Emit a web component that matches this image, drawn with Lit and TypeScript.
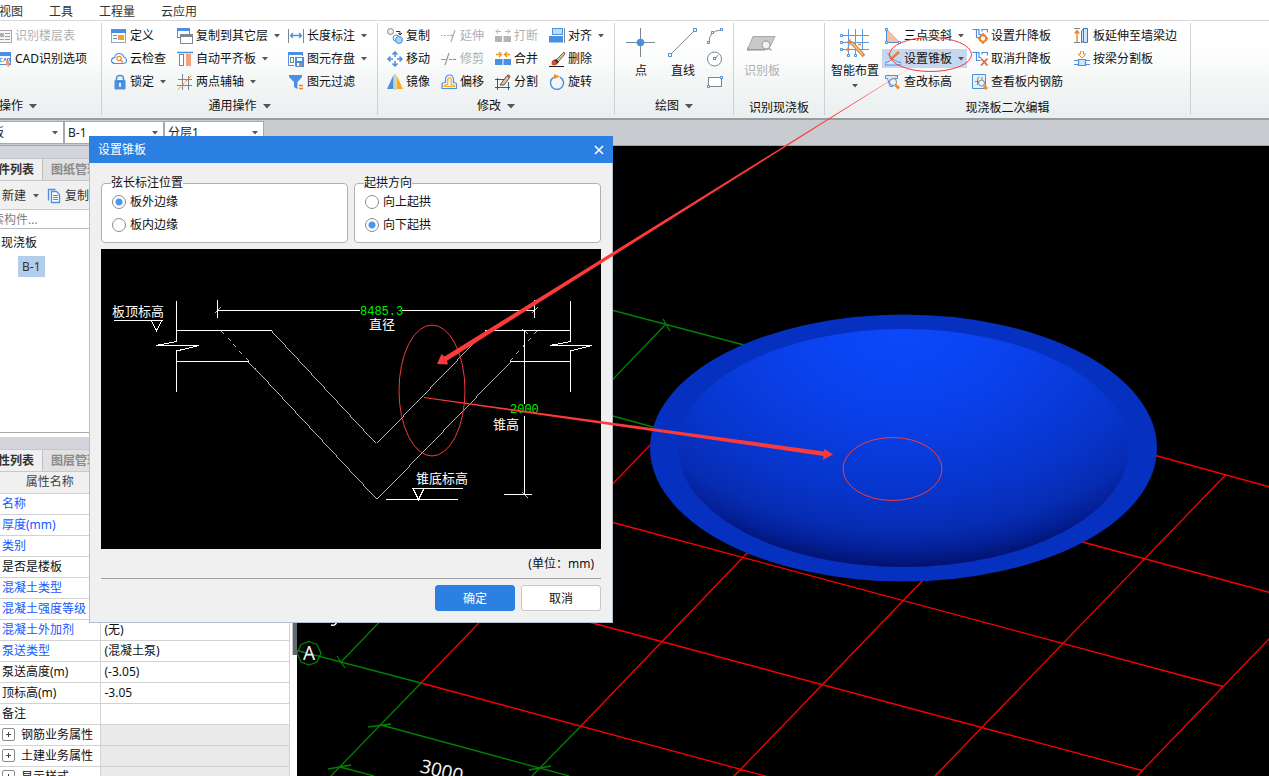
import { LitElement, html, svg, css, nothing, TemplateResult } from "lit";
import { customElement, property } from "lit/decorators.js";
import { classMap } from "lit/directives/class-map.js";

const BLUE = "#4a8fe0";
const NAVY = "#3a78c4";
const ORANGE = "#f07d28";
const SLATE = "#7b8894";
const MUTED = "#b4b4b4";

/* 16 x 16 toolbar glyphs */
const icons: Record<string, TemplateResult> = {
  floors: svg`<rect x=".5" y="2.5" width="15" height="12" fill="#f6f6f6" stroke="#a8a8a8"/><path d="M9 5.500h5M9 8.500h5M9 11.500h5" stroke="#a0a0a0"/><rect x="4" y="5" width="4" height="4" fill="#b0b0b0"/><path d="M4 11.500h4" stroke="#a0a0a0"/>`,
  cad: svg`<rect x=".5" y="1.5" width="14" height="12" fill="#fff" stroke="${BLUE}"/><path d="M0 1h15v4H0z" fill="${BLUE}"/><path d="M6.500 7.500Q4 6.500 4 9T6.500 10.500M7.500 10.500 9 7l1.500 3.500M11.500 7.500v3q3 0 2-3z" stroke="${BLUE}" fill="none"/><path d="m10 8 5 5-2 .3.600 2.200-1.800.3-.8-2.100L10 15z" fill="#f4966a"/>`,
  define: svg`<rect x=".5" y="1.500" width="14" height="13" fill="#fff" stroke="#9aa7b2"/><path d="M0 1h15v4H0z" fill="${BLUE}"/><path d="M2 7.500h4M2 10.500h4" stroke="${BLUE}"/><rect x="7" y="7" width="6" height="5" fill="#f5a42a"/>`,
  cloud: svg`<path d="M4.500 12.500C1.500 12.500.5 11 .5 9.500S2 6.800 3.500 6.700C4 4 6 2.500 8.200 2.500c2.300 0 4 1.500 4.500 3.500 1.800.3 2.800 1.500 2.800 3.200 0 2-1.400 3.300-3.500 3.300z" fill="#fff" stroke="${BLUE}" stroke-width="1.200"/><circle cx="8" cy="7.500" r="2.200" fill="none" stroke="${ORANGE}" stroke-width="1.100"/><path d="m9.500 9 2.500 2.500" stroke="${ORANGE}" stroke-width="1.200"/>`,
  lock: svg`<path d="M5.500 7V4.500Q5.500 1.500 9 1.500t3.500 3V7" fill="none" stroke="${BLUE}" stroke-width="1.600"/><rect x="3.500" y="6" width="11" height="9.500" rx="1" fill="${BLUE}"/><path d="M9 9v4M8 10h2" stroke="#fff" stroke-width="1.500"/>`,
  copyfloor: svg`<rect x=".5" y=".5" width="12" height="9" fill="#fff" stroke="${SLATE}"/><path d="M0 0h13v3H0z" fill="${BLUE}"/><rect x="3.500" y="6.500" width="12" height="9" fill="#fff" stroke="${SLATE}"/><path d="M3 6h13v3H3z" fill="${SLATE}"/>`,
  level: svg`<path d="M0 1.500h16" stroke="${BLUE}" stroke-width="1.500"/><rect x="2.500" y="3.500" width="4" height="11" fill="#fff" stroke="${SLATE}"/><path d="M9 3h5v12H9z" fill="#f7a07c"/>`,
  axis: svg`<path d="M5.500 0v16M11.500 2v14M1 5.500h14M0 11.500h15" stroke="${SLATE}"/><path d="M1 15.500 15 1" stroke="${ORANGE}" stroke-dasharray="4 1"/>`,
  length: svg`<path d="M.5 1v14M15.500 1v14" stroke="${SLATE}"/><path d="M3 7.500h10M5 5 2.500 7.500 5 10m6-5 2.500 2.500L11 10" stroke="${BLUE}" fill="none" stroke-width="1.300"/>`,
  store: svg`<path d="M.5 14.500V1.500h14V5M.5 14.500H6" stroke="${BLUE}" fill="none"/><path d="M0 1h15v3H0zM7 6h9v10H8l-1-1z" fill="${BLUE}"/><rect x="2.500" y="6.500" width="3" height="5" fill="none" stroke="${SLATE}"/><path d="M9 7h5v3H9zM9 12h5v3H9z" fill="#fff"/><path d="M11 12h3v3h-3z" fill="${ORANGE}"/>`,
  filter: svg`<path d="M1 1h13v2L9.500 8v7L6 13V8L1 3z" fill="${BLUE}"/><path d="M11 11.500h4M11 14.500h4" stroke="${ORANGE}" stroke-width="1.300"/>`,
  copy: svg`<circle cx="3.500" cy="3.500" r="3" fill="#eee" stroke="${SLATE}"/><path d="M9 3.500h4v3M11.500 5l1.500 2 2-2" fill="none" stroke="#333"/><circle cx="9" cy="10" r="3" fill="#fff" stroke="${BLUE}"/><circle cx="12" cy="12" r="3.500" fill="#a9d0f8" stroke="${BLUE}"/>`,
  move: svg`<path d="M8 1v5M8 10v5M1 8h5M10 8h5M5.500 3.500 8 1l2.500 2.500M5.500 12.500 8 15l2.500-2.500M3.500 5.500 1 8l2.500 2.500M12.500 5.500 15 8l-2.500 2.500" fill="none" stroke="${BLUE}" stroke-width="1.500"/>`,
  mirror: svg`<path d="M6.500 1v14H0z" fill="${BLUE}"/><path d="M9.500 1v14H16z" fill="#f5ae24"/><path d="M8 0v16" stroke="#9aa" />`,
  extend: svg`<path d="M0 7.500h9" stroke="${MUTED}" stroke-dasharray="2 1"/><path d="M10 14 14 2M9 7.500h4" stroke="${MUTED}" stroke-width="1.300"/>`,
  trim: svg`<path d="M0 8.500h5M4 14 8 2" stroke="#999" stroke-width="1.200"/><path d="M8 8.500h8" stroke="#888" stroke-dasharray="3 1"/>`,
  offset: svg`<path d="M1 14.500v-4q0-2 3.500-2V6Q4.500 1 8.500 1t4 5v2.500q3 0 3 2v4z" fill="none" stroke="${BLUE}" stroke-width="1.200"/><path d="M3 12.500q0-1.800 3.700-1.800V7Q6.700 3.500 8.500 3.500T10.300 7v3.700Q13.500 10.700 13.500 12.500z" fill="none" stroke="#f5ae24" stroke-width="1.200"/>`,
  split: svg`<path d="M0 8h7v6H0zM8.500 8H16v6H8.500z" fill="${MUTED}"/><path d="M1 3.500h5M3.500 1 1 3.500 3.500 6M10 3.500h5M12.500 1 15 3.500 12.500 6" stroke="${MUTED}" fill="none"/>`,
  merge: svg`<path d="M0 8h7.500v6H0zM8.500 8H16v6H8.500z" fill="${BLUE}"/><path d="M1 3.500h5M4 1l2.500 2.500L4 6M15 3.500h-5M12 1 9.500 3.500 12 6" stroke="#f0941e" fill="none" stroke-width="1.300"/>`,
  cut: svg`<path d="M0 5.500h10M0 13.500h15M2.500 4v12M13.500 8v8" stroke="#34578c"/><path d="M5 11h4l6-8-1-2-2 .5z" fill="#e9c49a" stroke="#333" stroke-width=".8"/><path d="m13 1 2 2-1 1.500-2-2z" fill="#d65640"/>`,
  align: svg`<path d="M15.500 0v15" stroke="${SLATE}"/><rect x="3.500" y=".5" width="10" height="6" fill="#b9dcfb" stroke="${BLUE}"/><path d="M0 8h14v6.500H0z" fill="${BLUE}"/>`,
  erase: svg`<path d="M0 15.500h15" stroke="#222"/><path d="m15 1-8 8 2 2 7-8z" fill="#e0b98c" stroke="#333" stroke-width=".7"/><path d="M7 8 10 11 7 14 3 13V10z" fill="#333"/><circle cx="5" cy="12" r="2.500" fill="#d8531e"/>`,
  rotate: svg`<path d="M5 3.200A6.500 6.500 0 1 0 11 3.200" fill="none" stroke="${BLUE}" stroke-width="1.400"/><path d="m5 0 6 2.500L5 5z" fill="#f0901e"/>`,
  arc: svg`<path d="M2 14Q2 3 14 2" fill="none" stroke="${SLATE}"/><path d="M.5 13.500h2v2h-2zM4.500 3.500h2v2h-2zM13.500.5h2v2h-2z" fill="#fff" stroke="${BLUE}"/>`,
  circle: svg`<circle cx="7.500" cy="8" r="7" fill="#fff" stroke="${SLATE}"/><path d="m8 8 3-4" stroke="${BLUE}"/><rect x="6.500" y="6.500" width="2" height="2" fill="#fff" stroke="${BLUE}"/>`,
  rect: svg`<rect x="1.500" y="3.500" width="13" height="9" fill="#fff" stroke="${SLATE}"/><path d="M.5 11.500h2v2h-2zM13.500 2.500h2v2h-2z" fill="#fff" stroke="${BLUE}"/>`,
  slope: svg`<path d="M1.500 1v13.500h13z" fill="#f9bf9c" stroke="#f0a070"/><path d="M1.500 2v12.500H14" stroke="${BLUE}" fill="none"/><path d="M.5.5h2v2h-2zM.5 13.500h2v2h-2zM13.500 13.500h2v2h-2z" fill="#fff" stroke="${BLUE}"/>`,
  cone: svg`<path d="M0 11.500 3 11l4-3 6 3 3 .5V14H0z" fill="#d3e6f9" stroke="${BLUE}"/><path d="m6 8 8-7" stroke="${ORANGE}" stroke-width="2.500"/><path d="m2.500 2 4 6" stroke="#d07a86"/>`,
  elevation: svg`<path d="M.5 1.500h12v3h-2L8 12.500H5L2.500 4.500h-2z" fill="#d9ebfb" stroke="${BLUE}"/><circle cx="8" cy="8" r="3.500" fill="#eef6fd" stroke="${SLATE}"/><path d="m10.500 11 3.500 3.500" stroke="#f0901e" stroke-width="3"/>`,
  raise: svg`<path d="M.5 1.500h4v8h4M3 1.500h4v5h2m1-3V1.500h5.500v3" fill="none" stroke="${BLUE}" stroke-width="1.200"/><circle cx="11" cy="10.500" r="3.300" fill="#fff" stroke="${ORANGE}" stroke-width="2.200"/><path d="M11 5v2M11 14v2M5.800 10.500h2M14.200 10.500h1.800" stroke="${ORANGE}" stroke-width="1.600"/>`,
  unraise: svg`<path d="M.5 1.500h4v8h4M3 1.500h4v5h2m1-3V1.500h5.500v3" fill="none" stroke="${BLUE}" stroke-width="1.200"/><path d="m9 7.500 6.500 7M15.500 7.500l-6.500 7" stroke="#e0674a" stroke-width="1.800"/>`,
  rebar: svg`<path d="M.5.5h13v14H.5z" fill="#e7f1fb" stroke="${BLUE}"/><path d="M3 7.500h9M7.500 3q-2 0-2 3v5M10 3v3" stroke="${SLATE}" fill="none"/><circle cx="9.500" cy="9" r="3" fill="#eef6fd" stroke="${SLATE}"/><path d="m12 12 3 3" stroke="#f0901e" stroke-width="3"/>`,
  extendwall: svg`<path d="M0 .5h6M0 14.500h6" stroke="${SLATE}"/><path d="M3 14V3M.8 5.500 3 2.500l2.200 3" stroke="${ORANGE}" stroke-width="1.300" fill="none"/><path d="M7.500 3 9.500.5v12.500l-2 2zM9.500.5h4v14h-4z" fill="#d3e6f9" stroke="${NAVY}"/>`,
  beamcut: svg`<path d="M6.500 0h3v3h2.500L8 7 4 3h2.500z" fill="#fff" stroke="#f0901e"/><path d="M4.500 8.500h7v6h-7zM0 9.500h4M0 13.500h4M12 9.500h4M12 13.500h4" fill="#d3e6f9" stroke="${BLUE}" stroke-width="1.200"/>`,
  pages: svg`<path d="M1.500 12.500V1.500h7" fill="none" stroke="${BLUE}" stroke-width="1.300"/><path d="M4.500 3.500h5l3 3v8h-8z" fill="#fff" stroke="${BLUE}" stroke-width="1.300"/><path d="M6 7.500h5M6 9.500h5M6 11.500h5" stroke="${BLUE}"/>`,
};

/* 30 x 30 glyphs of the tall buttons */
const bigIcons: Record<string, TemplateResult> = {
  point: svg`<path d="M0 14.500h29M14.500 0v29" stroke="${SLATE}"/><circle cx="14.500" cy="14.500" r="3.800" fill="${BLUE}"/>`,
  line: svg`<path d="M2 27 27 2" stroke="${SLATE}"/><path d="M.5 25.500h3v3h-3zM25.500.5h3v3h-3z" fill="#fff" stroke="${BLUE}"/>`,
  slab: svg`<path d="M6 8.500h22L21.500 21.500H.5z" fill="#c9c9c9" stroke="#a6a6a6"/><path d="M.5 19.500 0 22h18" stroke="#8d8d8d" fill="none"/><circle cx="19" cy="17" r="4" fill="#f2f2f2" stroke="#aaa" stroke-width="1.400"/><path d="m22 20 2.500 2.500" stroke="#aaa" stroke-width="1.500"/>`,
  smart: svg`<path d="M2 7.500h27M2 14.500h27M2 21.500h27M8.500 1v26M15.500 1v26M22.500 1v20" stroke="#5b9ae4"/><path d="M.5 6.500h2v2h-2zM.5 13.500h2v2h-2zM.5 20.500h2v2h-2zM7.500 26.500h2v2h-2zM14.500 26.500h2v2h-2z" fill="#fff" stroke="${BLUE}"/><path d="m12 15 12 13" stroke="#c98b4b" stroke-width="3.500"/><path d="m12 15 11 12" stroke="#f2c99a" stroke-width="1.200"/><path d="m10 10 1 3 3 1-3 1-1 3-1-3-3-1 3-1z" fill="${ORANGE}"/><path d="M6 21.500h4M8 19.500v4M18 16.500h3" stroke="${ORANGE}" stroke-width="1.300"/>`,
};

const caret = html`<svg class="caret" width="6" height="4" viewBox="0 0 6 4" aria-hidden="true"><path d="M0 0h6L3 3.500z" fill="#555"/></svg>`;
const bigCaret = html`<svg class="caret" width="8" height="5" viewBox="0 0 8 5" aria-hidden="true"><path d="M0 0h8L4 4.500z" fill="#555"/></svg>`;

interface Tool { icon: string; text: string; drop?: boolean; off?: boolean; on?: boolean; }

const t = (icon: string, text: string, opt: Partial<Tool> = {}): Tool => ({ icon, text, ...opt });

const reset = css`
  button { border: 0; margin: 0; padding: 0; background: none; font: inherit; color: inherit; white-space: nowrap; text-align: left; }
  svg { display: block; flex: none; }
`;

@customElement("ribbon-bar")
class RibbonBar extends LitElement {
  static styles = [reset, css`
    :host { display: block; }
    .menu { display: flex; gap: 26px; height: 20px; align-items: center; padding-top: 3px; box-sizing: border-box; margin-left: -1px; color: #333; background: #fff; }
    .menu button { line-height: 16px; }
    .ribbon { display: flex; border-top: 1px solid #d9d9d9; border-bottom: 2px solid #979d9f; padding: 2px 0 3px; background: linear-gradient(#fff 25%, #eaeeee); }
    .group { flex: none; box-sizing: border-box; border-right: 1px solid #cdd1d3; padding-top: 1px; height: 92px; display: flex; flex-direction: column; }
    .body { display: flex; height: 69px; }
    .cols { display: grid; grid-template-rows: repeat(3, 23px); grid-auto-flow: column; align-items: center; justify-items: start; }
    .tool { display: flex; align-items: center; height: 19px; padding: 0 3px; }
    .tool svg.ic { margin-right: 3px; }
    .tool .caret { margin-left: 6px; }
    .off { color: #b0b0b0; }
    .on { background: #c5d8f0; }
    .big { display: flex; flex-direction: column; align-items: center; height: 69px; padding-top: 4px; line-height: 16px; }
    .big svg.ic { margin-bottom: 5px; }
    .big .caret { margin-top: 5px; }
    .label { display: flex; justify-content: center; align-items: center; gap: 6px; box-sizing: border-box; height: 22px; padding-top: 4px; }
    .plain { padding-top: 8px; }
    .g1 { width: 102px; overflow: hidden; }
    .g1 .cols { margin-left: -7px; }
    .g1 .label { justify-content: flex-start; margin-left: -1px; }
    .g2 { width: 276px; } .g2 .body { padding-left: 6px; } .g2 .cols { grid-template-columns: 66px 111px 90px; }
    .g3 { width: 237px; } .g3 .body { padding-left: 6px; } .g3 .cols { grid-template-columns: repeat(4, 54px); }
    .g4 { width: 119px; } .g4 .body { padding-left: 8px; gap: 6px; } .g4 .big { width: 36px; } .g4 .tool { padding: 0; }
    .g5 { width: 91px; } .g5 .body { padding-left: 10px; }
    .g6 { width: 366px; } .g6 .body { padding-left: 6px; gap: 3px; } .g6 .cols { grid-template-columns: 87px 102px 110px; }
  `];

  private tool(x: Tool) {
    return html`<button class=${classMap({ tool: true, off: !!x.off, on: !!x.on })} ?disabled=${x.off}>
      <svg class="ic" width="16" height="16" viewBox="0 0 16 16" aria-hidden="true">${icons[x.icon]}</svg>${x.text}${x.drop ? caret : nothing}
    </button>`;
  }

  private cols(list: Tool[]) {
    return html`<div class="cols">${list.map((x) => this.tool(x))}</div>`;
  }

  private big(icon: string, text: string, off = false, drop = false) {
    return html`<button class=${classMap({ big: true, off })} ?disabled=${off}>
      <svg class="ic" width="30" height="30" viewBox="0 0 30 30" aria-hidden="true">${bigIcons[icon]}</svg>${text}${drop ? caret : nothing}
    </button>`;
  }

  render() {
    return html`
      <nav class="menu">${["视图", "工具", "工程量", "云应用"].map((m) => html`<button>${m}</button>`)}</nav>
      <div class="ribbon">
        <section class="group g1">
          <div class="body">${this.cols([t("floors", "识别楼层表", { off: true }), t("cad", "CAD识别选项")])}</div>
          <button class="label">操作${bigCaret}</button>
        </section>
        <section class="group g2">
          <div class="body">${this.cols([
            t("define", "定义"), t("cloud", "云检查"), t("lock", "锁定", { drop: true }),
            t("copyfloor", "复制到其它层", { drop: true }), t("level", "自动平齐板", { drop: true }), t("axis", "两点辅轴", { drop: true }),
            t("length", "长度标注", { drop: true }), t("store", "图元存盘", { drop: true }), t("filter", "图元过滤"),
          ])}</div>
          <button class="label">通用操作${bigCaret}</button>
        </section>
        <section class="group g3">
          <div class="body">${this.cols([
            t("copy", "复制"), t("move", "移动"), t("mirror", "镜像"),
            t("extend", "延伸", { off: true }), t("trim", "修剪", { off: true }), t("offset", "偏移"),
            t("split", "打断", { off: true }), t("merge", "合并"), t("cut", "分割"),
            t("align", "对齐", { drop: true }), t("erase", "删除"), t("rotate", "旋转"),
          ])}</div>
          <button class="label">修改${bigCaret}</button>
        </section>
        <section class="group g4">
          <div class="body">${this.big("point", "点")}${this.big("line", "直线")}${this.cols([t("arc", ""), t("circle", ""), t("rect", "")])}</div>
          <button class="label">绘图${bigCaret}</button>
        </section>
        <section class="group g5">
          <div class="body">${this.big("slab", "识别板", true)}</div>
          <div class="label plain">识别现浇板</div>
        </section>
        <section class="group g6">
          <div class="body">${this.big("smart", "智能布置", false, true)}${this.cols([
            t("slope", "三点变斜", { drop: true }), t("cone", "设置锥板", { drop: true, on: true }), t("elevation", "查改标高"),
            t("raise", "设置升降板"), t("unraise", "取消升降板"), t("rebar", "查看板内钢筋"),
            t("extendwall", "板延伸至墙梁边"), t("beamcut", "按梁分割板"),
          ])}</div>
          <div class="label plain">现浇板二次编辑</div>
        </section>
      </div>`;
  }
}

interface Prop { name: string; value?: string; blue?: boolean; group?: boolean; }

const props: Prop[] = [
  { name: "名称", blue: true },
  { name: "厚度(mm)", blue: true },
  { name: "类别", blue: true },
  { name: "是否是楼板" },
  { name: "混凝土类型", blue: true },
  { name: "混凝土强度等级", blue: true },
  { name: "混凝土外加剂", value: "(无)", blue: true },
  { name: "泵送类型", value: "(混凝土泵)", blue: true },
  { name: "泵送高度(m)", value: "(-3.05)" },
  { name: "顶标高(m)", value: "-3.05" },
  { name: "备注" },
  { name: "钢筋业务属性", group: true },
  { name: "土建业务属性", group: true },
  { name: "显示样式", group: true },
];

@customElement("side-panel")
class SidePanel extends LitElement {
  static styles = [reset, css`
    :host { display: flex; flex-direction: column; overflow: hidden; background: #fff; }
    .band { height: 12px; flex: none; background: #d4d4dc; border-bottom: 1px solid #c4c6cc; }
    .tabs { display: flex; flex: none; height: 21px; border-bottom: 1px solid #c9c9c9; background: #e1e1e1; font-weight: bold; color: #8a8a8a; }
    .tabs button { padding: 1px 8px 0; border-right: 1px solid #c0c0c0; height: 21px; }
    .tabs .active { margin-left: -22px; background: #f0f0f0; color: #333; }
    .bar { display: flex; align-items: center; flex: none; height: 26px; padding-top: 2px; background: #f0f0f0; color: #333; border-bottom: 1px solid #c9c9c9; padding-left: 2px; }
    .bar button { display: flex; align-items: center; }
    .bar .caret { margin-left: 7px; }
    .bar svg.ic { margin: 0 4px 0 8px; }
    .search { display: block; flex: none; box-sizing: border-box; height: 19px; border: 0; border-bottom: 1px solid #b9bcc4; margin: 0 0 0 -22px; padding: 0 2px; font: inherit; color: #333; outline: 0; }
    .search::placeholder { color: #808080; }
    .tree { flex: none; height: 204px; border-bottom: 1px solid #aaa; margin: 0 0 4px; padding: 2px 0 0 1px; box-sizing: border-box; list-style: none; }
    .tree li { line-height: 24px; }
    .tree .leaf { margin-left: 17px; }
    .tree .leaf span { display: inline-block; line-height: 21px; padding: 0 4px; background: #b3cdec; color: #333; }
    table { border-collapse: collapse; width: 100%; table-layout: fixed; }
    th, td { box-sizing: border-box; height: 21px; padding: 0 2px; line-height: 20px; border-bottom: 1px solid #d2d2d2; border-right: 1px solid #d2d2d2; text-align: left; font-weight: normal; white-space: nowrap; }
    td { padding-left: 4px; }
    thead th { background: #f0f0f0; color: #444; text-align: center; }
    .name { width: 100px; }
    .blue { color: #1559ff; }
    .grey { background: #eaeaea; }
    .cell { display: flex; align-items: center; gap: 6px; height: 20px; }
    .plus { width: 13px; height: 13px; border: 1px solid #8a8a8a; border-radius: 2px; box-sizing: border-box; background: #fff; }
  `];

  render() {
    return html`
      <div class="band"></div>
      <div class="tabs"><button class="active">构件列表</button><button>图纸管理</button></div>
      <div class="bar">
        <button>新建${caret}</button>
        <button><svg class="ic" width="14" height="16" viewBox="0 0 14 16" aria-hidden="true">${icons.pages}</svg>复制</button>
      </div>
      <input class="search" type="text" placeholder="搜索构件..." aria-label="搜索构件" />
      <ul class="tree"><li>现浇板</li><li class="leaf"><span>B-1</span></li></ul>
      <div class="band"></div>
      <div class="tabs"><button class="active">属性列表</button><button>图层管理</button></div>
      <table>
        <thead><tr><th class="name" scope="col">属性名称</th><th></th></tr></thead>
        <tbody>
          ${props.map((p) => html`<tr>
            <th scope="row" class=${classMap({ blue: !!p.blue })}>
              ${p.group
                ? html`<span class="cell"><svg class="plus" viewBox="0 0 11 11" aria-hidden="true"><path d="M3 5.500h5M5.500 3v5" stroke="#444"/></svg>${p.name}</span>`
                : p.name}
            </th>
            <td class=${classMap({ grey: !!p.group })}>${p.value ?? ""}</td>
          </tr>`)}
        </tbody>
      </table>`;
  }
}

@customElement("model-view")
class ModelView extends LitElement {
  static styles = css`
    :host { display: block; background: #000; overflow: hidden; }
    svg { display: block; width: 100%; height: 100%; }
    .red { stroke: #fc0000; fill: none; stroke-width: 1.3; }
    .green { stroke: #008200; fill: none; stroke-width: 1.3; }
    text { fill: #f2f2f2; font-size: 19px; }
  `;

  render() {
    return html`<svg role="img" aria-label="锥板">
      <defs>
        <radialGradient id="bowl" gradientUnits="userSpaceOnUse" cx="0" cy="0" r="1" gradientTransform="translate(903 329) scale(348 238)">
          <stop offset="0" stop-color="#0c48fb"/><stop offset=".3" stop-color="#0a42ee"/><stop offset=".5" stop-color="#093cde"/>
          <stop offset=".7" stop-color="#0734ca"/><stop offset=".85" stop-color="#062cb2"/><stop offset=".93" stop-color="#042096"/><stop offset="1" stop-color="#02126e"/>
        </radialGradient>
      </defs>
      <g transform="translate(-297 -146)">
        <path class="green" d="M297 650.500 421 683M341 662 666 324M600 307 744 345M600 412.500 653 427M421 683 330 777M581 726 531 777M741 769 733 777M381 725 569 776M340 767 374 776M337 656 345 668M663 319 670 331M368 727 391 724M328 769 351 765M529 770 551 766"/>
        <path class="green" d="m309 641.500 8 3 4 8.500-4 9-8 3-8-3-4-9 4-8.500z"/>
        <path class="red" d="M1150 454 1270 487M1075 540 1270 592.500M600 519 1223 686.500M585 621 1142 770.500M421 683 769 777M421 683 655 440M581 726 750 550M734 776 741 769 925 578M935 776 1225.500 475M1136 777 1270 638"/>
        <ellipse cx="903.500" cy="448" rx="253.500" ry="133.500" fill="#0630bf"/>
        <ellipse cx="903.500" cy="448" rx="225.500" ry="119" fill="url(#bowl)"/>
        <text x="309" y="660" text-anchor="middle">A</text>
        <text x="419" y="772" transform="rotate(14 419 772)">3000</text>
        <path d="M331 625q5 1 6-4" stroke="#fff" fill="none" stroke-width="1.500"/>
      </g>
    </svg>`;
  }
}

@customElement("cone-dialog")
class ConeDialog extends LitElement {
  static styles = [reset, css`
    :host { display: block; box-sizing: border-box; width: 524px; background: #f0f0f0; border: 1px solid #b4c0cc; border-top: 0; }
    .title { display: flex; justify-content: space-between; align-items: center; height: 27px; margin: 0 -1px; padding: 0 9px; background: #2c80e2; color: #fff; }
    .title button { display: block; }
    .content { padding: 13px 11px 11px; }
    .sets { display: grid; grid-template-columns: 1fr 1fr; gap: 6px; }
    fieldset { margin: 0; min-width: 0; border: 1px solid #b0b0b0; border-radius: 4px; padding: 0 10px 6px; background: #fff; }
    legend { padding: 0; line-height: 14px; margin-left: -1px; }
    label { display: flex; align-items: center; gap: 4px; height: 23px; }
    input { appearance: none; width: 14px; height: 14px; margin: 0; border: 1px solid #8c8c8c; border-radius: 50%; background: #fff; }
    input:checked { background: radial-gradient(circle, #4a97f2 0 3px, #fff 4px); }
    .draft { width: 100%; background: #000; margin-top: 6px; }
    .ln { stroke: #fff; fill: none; shape-rendering: crispEdges; }
    .slant { stroke-width: .7; }
    .dash { stroke-dasharray: 4 5; }
    .zh { fill: #fff; font-size: 13px; font-family: "Noto Sans CJK SC", sans-serif; }
    .num { fill: #00f000; font-size: 12px; font-family: "Liberation Mono", monospace; }
    .unit { text-align: right; line-height: 29px; padding-right: 7px; border-bottom: 1px solid #a0a0a0; }
    .actions { display: flex; justify-content: flex-end; gap: 6px; padding-top: 6px; }
    .actions button { box-sizing: border-box; width: 80px; height: 26px; padding-top: 1px; border-radius: 3px; text-align: center; border: 1px solid #c8c8c8; background: #fff; }
    .actions .ok { background: #2c80e2; border-color: #2c80e2; color: #fff; }
  `];

  private radio(name: string, text: string, on = false) {
    return html`<label><input type="radio" name=${name} ?checked=${on} />${text}</label>`;
  }

  render() {
    return html`
      <header class="title"><span>设置锥板</span>
        <button aria-label="关闭"><svg width="10" height="10" viewBox="0 0 10 10"><path d="m1 1 8 8M9 1 1 9" stroke="#fff" stroke-width="1.600"/></svg></button>
      </header>
      <div class="content">
        <div class="sets">
          <fieldset><legend>弦长标注位置</legend>${this.radio("chord", "板外边缘", true)}${this.radio("chord", "板内边缘")}</fieldset>
          <fieldset><legend>起拱方向</legend>${this.radio("arch", "向上起拱")}${this.radio("arch", "向下起拱", true)}</fieldset>
        </div>
        <svg class="draft" viewBox="101 249 500 300" role="img" aria-label="设置锥板">
          <path class="ln" d="M114 320.500h49M151 320.500l5.500 10 5.500-10M176.500 301v40.500L156 345.500h43L176.500 351v41M176.500 330.500H272M485 330.500h85.500M176.500 361.500h72M510 361.500h60.500M570.500 301v40.500L550 345.500h42L570.500 351v41"/>
          <path class="ln slant" d="M272 330.500 376.500 443 485 330.500M248.500 361.500 376.500 499 510 361.500"/>
          <path class="ln slant dash" d="m221.500 331 27 30M537 331l-27 30"/>
          <path class="ln" d="M217.500 300v18M217 310.500h143M402 310.500h133M534.500 300v18M524.500 330v74M524.500 416v78M504 494.500h28M412 488.500h51M413 488.500l5.500 11 5.500-11M386 499.500h72"/>
          <path class="ln slant" d="M215 313l6-6M532 313l6-6M522 329l6 5M522 492l6 6"/>
          <text class="zh" x="112" y="316">板顶标高</text>
          <text class="zh" x="369" y="329">直径</text>
          <text class="zh" x="493" y="429">锥高</text>
          <text class="zh" x="416" y="483">锥底标高</text>
          <text class="num" x="360" y="315">8485.3</text>
          <text class="num" x="510" y="413">2000</text>
        </svg>
        <div class="unit">(单位：mm)</div>
        <div class="actions"><button class="ok">确定</button><button>取消</button></div>
      </div>`;
  }
}

@customElement("combo-box")
class ComboBox extends LitElement {
  @property() value = "";
  @property() label = "";
  static styles = css`
    :host { display: grid; grid-template-columns: 1fr 11px; align-items: center; box-sizing: border-box; width: 100px; height: 23px; background: #fff; border: 1px solid #a6a9ad; }
    select { grid-area: 1 / 1 / 2 / 3; appearance: none; border: 0; background: none; margin: 0; padding: 0 3px; height: 21px; font: inherit; color: #222; }
    svg { grid-area: 1 / 2; pointer-events: none; }
  `;
  render() {
    return html`<select aria-label=${this.label}><option>${this.value}</option></select>${caret}`;
  }
}

@customElement("app-root")
class AppRoot extends LitElement {
  static styles = css`
    :host { display: flex; flex-direction: column; position: relative; height: 100vh; overflow: hidden; font: 12px/18px "Noto Sans", "Noto Sans CJK SC", sans-serif; color: #111; background: #fff; }
    ribbon-bar { flex: none; }
    .context { display: flex; flex: none; height: 26px; box-sizing: border-box; padding-top: 1px; background: #c8cbcf; border-bottom: 1px solid #a0a3a8; }
    .context combo-box:first-child { margin-left: -36px; }
    .work { display: flex; flex: 1; min-height: 0; }
    side-panel { width: 290px; flex: none; }
    .gutter { width: 7px; flex: none; box-sizing: border-box; padding-left: 2px; background: #fff; }
    .thumb { height: 509px; border-left: 1px solid #c4c4c4; background: #606a74; }
    model-view { flex: 1; min-width: 0; }
    cone-dialog { position: absolute; left: 89px; top: 136px; }
    .marks { position: absolute; left: 0; top: 0; width: 100%; height: 100%; pointer-events: none; }
    .ring { fill: none; stroke: #f03c3c; }
    .arrow { fill: #fb3a3a; }
  `;

  render() {
    return html`
      <ribbon-bar></ribbon-bar>
      <div class="context">
        <combo-box label="构件类型" value="现浇板"></combo-box>
        <combo-box label="构件" value="B-1"></combo-box>
        <combo-box label="分层" value="分层1"></combo-box>
      </div>
      <main class="work">
        <side-panel></side-panel>
        <div class="gutter"><div class="thumb"></div></div>
        <model-view></model-view>
      </main>
      <cone-dialog></cone-dialog>
      <svg class="marks" aria-hidden="true">
        <ellipse class="ring" cx="930.500" cy="54.500" rx="41" ry="17"/>
        <ellipse class="ring" cx="432" cy="390.500" rx="33" ry="65.500"/>
        <ellipse class="ring" cx="892.500" cy="469" rx="49.500" ry="31.500"/>
        <path class="arrow" d="M915 65 447 360.800 448 364.500 437 364 441.500 354 444.500 356.500z"/>
        <path class="arrow" d="M424 397 824 451.500 824.500 449 833 454.500 823 459.500 823.500 456 424 398z"/>
      </svg>`;
  }
}
